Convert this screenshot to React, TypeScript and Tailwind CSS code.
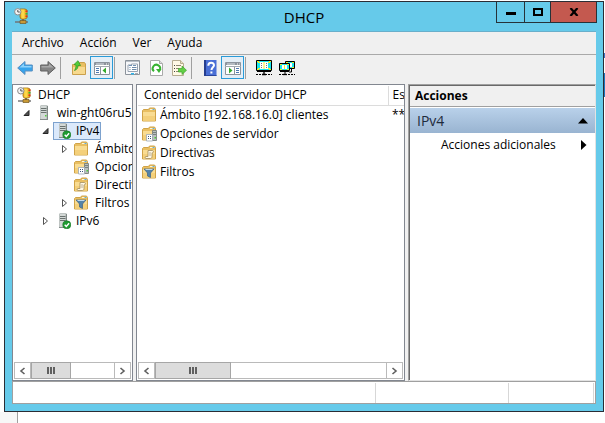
import type { ReactNode } from "react";

type IconProps = { children: ReactNode; w?: number; h?: number };

function Svg({ children, w = 16, h = 16 }: IconProps) {
  return (
    <svg width={w} height={h} viewBox={`0 0 ${w} ${h}`} aria-hidden="true" className="shrink-0">
      {children}
    </svg>
  );
}

function DhcpIcon() {
  return (
    <Svg>
      <path d="M6 1h5l2 1v8l-2 1H7L6 9z" fill="#f0b323" stroke="#9b6a12" strokeWidth=".8" />
      <path d="M7 1.500h3.500v9H7.500z" fill="#fbd84a" />
      <path d="M11.500 2.500h2V4h-2z" fill="#e0301e" />
      <path d="M11.500 5h2v1.500h-2z" fill="#3fae3a" />
      <path d="M11.500 7.500h2V9h-2z" fill="#e0301e" />
      <circle cx="3.800" cy="3.800" r="3.200" fill="#f4f4f4" stroke="#8b8b8b" />
      <path d="M3.800 2v2h2" fill="none" stroke="#444" strokeWidth=".9" />
      <path d="M8 11h2v2H8z" fill="#7c6a4a" />
      <path d="M1 14h13" stroke="#6f6f6f" strokeWidth="1.400" />
      <path d="M6 12.500h6v3H6z" fill="#c99a35" stroke="#735820" strokeWidth=".7" />
    </Svg>
  );
}

function ServerBody() {
  return (
    <>
      <path d="M4 1l1-.7h6l1 .7v13.5H4z" fill="#a9b0ae" />
      <path d="M4.500 1h6v13.500h-6z" fill="#d3d8d6" />
      <path d="M11 1h1v14h-1z" fill="#7f8785" />
      <path d="M5 3.500h5.500M5 5.500h5.500M5 7.500h5.500" stroke="#69716f" />
      <path d="M9 10h1.500v1.500H9z" fill="#4fd13c" />
      <path d="M4 14.500h8" stroke="#858c8a" />
    </>
  );
}

function ServerIcon() {
  return (
    <Svg>
      <ServerBody />
    </Svg>
  );
}

function ServerOkIcon() {
  return (
    <Svg>
      <ServerBody />
      <circle cx="11.800" cy="11.800" r="4" fill="#1f9b31" stroke="#12711f" strokeWidth=".6" />
      <path d="M9.700 11.800l1.600 1.700 2.800-3.300" fill="none" stroke="#fff" strokeWidth="1.400" />
    </Svg>
  );
}

function FolderBody() {
  return (
    <>
      <path d="M.5 3.500l1-1h5l1-1.500h5l1 1.500v11.500H.5z" fill="#e9bf62" stroke="#d0a348" />
      <path d="M1 5h12v8.500H1z" fill="#f9dc92" />
      <path d="M1 9h12v4.500H1z" fill="#f4d07b" />
      <path d="M8 2.500h4.500" stroke="#fff6d8" />
      <path d="M10.500 2.500h2" stroke="#5baee0" />
    </>
  );
}

function FolderIcon() {
  return (
    <Svg>
      <FolderBody />
    </Svg>
  );
}

function OptionsIcon() {
  return (
    <Svg>
      <FolderBody />
      <path d="M10.500 4.500h4v10h-4z" fill="#b9c0be" stroke="#707876" strokeWidth=".8" />
      <path d="M11 6.500h3M11 8.500h3" stroke="#6a7270" strokeWidth=".8" />
      <path d="M12.500 11h1.500v1.500h-1.500z" fill="#4bc93b" />
      <path d="M4.500 8.500h6v6.500h-6z" fill="#fff" stroke="#9aa7b4" strokeWidth=".8" />
      <path d="M6 10h1v1H6zM8 10h1v1H8zM6 12h1v1H6zM8 12h1v1H8z" fill="#39577c" />
    </Svg>
  );
}

function PolicyIcon() {
  return (
    <Svg>
      <FolderBody />
      <path d="M6 5.500h4.500c1.200 0 1.200 2.300 0 2.300H10v4c0 1.200-1 1.700-1.700 1.700H4c-1.200 0-1.200-2 0-2h2z" fill="#fff8e4" stroke="#a18b5c" strokeWidth=".8" />
      <path d="M7 8h2M7 10h2" stroke="#a99a78" strokeWidth=".8" />
    </Svg>
  );
}

function FilterIcon() {
  return (
    <Svg>
      <FolderBody />
      <path d="M2 5h10L8.500 9v4.500L5.500 12V9z" fill="#5583a8" stroke="#3f6383" strokeWidth=".7" />
      <path d="M3.500 5.500h7" stroke="#c1d9ea" />
    </Svg>
  );
}

function ArrowIcon({ kind }: { kind: "back" | "forward" }) {
  const back = kind === "back";
  return (
    <Svg>
      <path
        d={back ? "M.7 8L8 1.500v3.500h7.300v6H8v3.500z" : "M15.300 8L8 1.500v3.500H.7v6H8v3.500z"}
        fill={back ? "#36a4ec" : "#858585"}
        stroke={back ? "#5a8fc0" : "#5f5f5f"}
      />
      <path
        d={back ? "M2.500 7.500L7 3.500V6h7.500v1.500z" : "M13.500 7.500L9 3.500V6H1.500v1.500z"}
        fill={back ? "#8dd2fb" : "#a9a9a9"}
      />
    </Svg>
  );
}

function UpFolderIcon() {
  return (
    <Svg>
      <path d="M1.500 4.500h6l1-2h5l1 1.500v10.500h-13z" fill="#e9bf62" stroke="#caa04c" />
      <path d="M2 7h12v7H2z" fill="#f7d98e" />
      <path d="M3.500 10.500C6.500 9.500 7 7.500 7 5.500h2.500L7 .7 3 4.500 5 5c0 2.500-.5 3.500-1.500 5.500z" fill="#53cc37" stroke="#28951f" strokeWidth=".7" />
    </Svg>
  );
}

function PaneIcon({ side }: { side: "left" | "right" }) {
  const left = side === "left";
  return (
    <Svg>
      <path d="M.5 2.500h15v12H.5z" fill="#fff" stroke="#8c949d" />
      <path d="M1 3h14v2H1z" fill="#8c949d" />
      <path d="M2 4h8" stroke="#dce1e6" />
      <path d="M12 3.500h1v1h-1zM14 3.500h.7v1H14z" fill="#fff" />
      <path d="M0 6.500h16" stroke="#a2a9b1" />
      {left ? (
        <>
          <path d="M6.500 7v8" stroke="#8c949d" />
          <path d="M2 8.500h3M2 10.500h3M2 12.500h3" stroke="#4c79b2" />
          <path d="M12 7.500v6L8.500 10.500z" fill="#35aa2c" />
        </>
      ) : (
        <>
          <path d="M9.500 7v8" stroke="#8c949d" />
          <path d="M11 8.500h3M11 10.500h3M11 12.500h3" stroke="#4c79b2" />
          <path d="M4 7.500v6l3.500-3z" fill="#35aa2c" />
        </>
      )}
    </Svg>
  );
}

function PropertiesIcon() {
  return (
    <Svg>
      <path d="M.5.500h14v14H.5z" fill="#f7f8fa" stroke="#8c939b" />
      <path d="M1 1.500h13" stroke="#b9c0c8" />
      <path d="M3 5h3.500V4h6v7.500H3z" fill="#fff" stroke="#98a3b1" />
      <path d="M4 5.500h3M8 5.500h3" stroke="#6f91b5" />
      <path d="M4.500 7.500h1M4.500 9.500h1M7 7.500h4.500M7 9.500h4.500" stroke="#6b88a8" />
      <path d="M6 13h3v1.500H6z" fill="#2eb5eb" />
      <path d="M10 13h3v1h-3z" fill="#a5adb5" />
    </Svg>
  );
}

function RefreshIcon() {
  return (
    <Svg>
      <path d="M2.500.500h9l3 3v12h-12z" fill="#fff" stroke="#aaa" />
      <path d="M11.500.500v3h3" fill="#ddd" stroke="#aaa" />
      <path d="M6 11.300a3.700 3.700 0 1 1 5.600-1" fill="none" stroke="#39b332" strokeWidth="2" />
      <path d="M8 9h5.500L11 13z" fill="#39b332" />
    </Svg>
  );
}

function ExportIcon() {
  return (
    <Svg>
      <path d="M1.500.500h8l3 3v12h-11z" fill="#fff9e5" stroke="#b6ac91" />
      <path d="M9.500.500v3h3" fill="#eadfbf" stroke="#b6ac91" />
      <path d="M3 5.500h1M3 8.500h1M3 11.500h1" stroke="#444" />
      <path d="M5 5.500h5M5 8.500h3M5 11.500h3" stroke="#918870" />
      <path d="M7.500 8.500H11V6l4.500 4.300L11 14.500V12H7.500z" fill="#62cf45" stroke="#3da32c" strokeWidth=".7" />
    </Svg>
  );
}

function HelpIcon() {
  return (
    <Svg>
      <path d="M2 0h12.500v16H2z" fill="#4a6fd6" />
      <path d="M2 0h2v16H2z" fill="#263e8f" />
      <path d="M4 15h10.500v1H4z" fill="#2a479f" />
      <path d="M6.300 5.800c0-4 5.700-3.800 5.700-.6 0 2-2.500 2.200-2.500 4.800" fill="none" stroke="#fff" strokeWidth="2" />
      <path d="M8.400 11.500h2v2h-2z" fill="#fff" />
    </Svg>
  );
}

function MonitorIcon() {
  return (
    <Svg>
      <path d="M.5.500h15v10H.5z" fill="#19e6f0" stroke="#000" />
      <path d="M4 2h8v7H4z" fill="#fff" />
      <path d="M1 1h2v1H1zM2 2h2v1H2zM13 1h2v1h-2zM12 2h2v1h-2zM1 9h2v1H1zM2 8h2v1H2zM13 9h2v1h-2zM12 8h2v1h-2z" fill="#f5ee24" />
      <path d="M7.500 2h1v7h-1z" fill="#f5ee24" />
      <path d="M5.500 3v6M10.500 3v6" stroke="#777" strokeDasharray="1 1" />
      <path d="M1 11.500h14" stroke="#000" />
      <path d="M8 12v2M6 14.500h4" stroke="#000" strokeWidth="1.300" />
      <path d="M0 14.500h16" stroke="#000" strokeDasharray="2 1" />
    </Svg>
  );
}

function MonitorsIcon() {
  return (
    <Svg>
      <path d="M6.500 1.500h9v7h-9z" fill="#19e6f0" stroke="#000" />
      <path d="M9 3h4v4H9z" fill="#fff" />
      <path d="M7 2h2v1H7zM13 2h2v1h-2zM13 7h2v1h-2z" fill="#f5ee24" />
      <path d="M.5 3.500h10v7H.5z" fill="#19e6f0" stroke="#000" />
      <path d="M3 5h5v4H3z" fill="#fff" />
      <path d="M1 4h2v1H1zM8 4h2v1H8zM1 9h2v1H1zM8 9h2v1H8zM5 5h1v4H5z" fill="#f5ee24" />
      <path d="M1 11.500h9" stroke="#000" />
      <path d="M6 12v2M12.500 9v3H10" fill="none" stroke="#000" />
      <path d="M0 14.500h16" stroke="#000" strokeDasharray="2 1" />
      <path d="M4 14.500h4" stroke="#000" strokeWidth="1.300" />
    </Svg>
  );
}

function ToolButton({ label, pressed, children }: { label: string; pressed?: boolean; children: ReactNode }) {
  return (
    <button
      type="button"
      aria-label={label}
      aria-pressed={pressed}
      className={
        pressed
          ? "flex h-[23px] w-[23px] items-center justify-center border border-[#2a9bd8] bg-[#e4eef6]"
          : "flex h-[23px] w-[23px] items-center justify-center"
      }
    >
      {children}
    </button>
  );
}

function Separator() {
  return <div className="ml-px mr-1.5 h-[22px] w-px bg-[#a0a0a0]" />;
}

function Expander({ state }: { state?: "open" | "closed" }) {
  return (
    <span className="flex w-[13px] shrink-0 items-center">
      {state === "open" && (
        <Svg w={8} h={8}>
          <path d="M6 1.500V6.500H1z" fill="#505050" stroke="#262626" />
        </Svg>
      )}
      {state === "closed" && (
        <Svg w={8} h={10}>
          <path d="M1.500 1.500v7L5.500 5z" fill="#fff" stroke="#555" />
        </Svg>
      )}
    </span>
  );
}

type Node = {
  label: string;
  indent: string;
  icon: ReactNode;
  state?: "open" | "closed";
  root?: boolean;
  selected?: boolean;
};

const tree: Node[] = [
  { label: "DHCP", indent: "pl-1", icon: <DhcpIcon />, root: true },
  { label: "win-ght06ru5c", indent: "pl-2.5", icon: <ServerIcon />, state: "open" },
  { label: "IPv4", indent: "pl-[29px]", icon: <ServerOkIcon />, state: "open", selected: true },
  { label: "Ámbito", indent: "pl-12", icon: <FolderIcon />, state: "closed" },
  { label: "Opcion", indent: "pl-12", icon: <OptionsIcon /> },
  { label: "Directiv", indent: "pl-12", icon: <PolicyIcon /> },
  { label: "Filtros", indent: "pl-12", icon: <FilterIcon />, state: "closed" },
  { label: "IPv6", indent: "pl-[29px]", icon: <ServerOkIcon />, state: "closed" },
];

function TreeRow({ node }: { node: Node }) {
  return (
    <li role="treeitem" aria-selected={!!node.selected} className={`flex h-[18px] items-center whitespace-nowrap ${node.indent}`}>
      {!node.root && <Expander state={node.state} />}
      <span
        className={
          node.selected
            ? "-ml-0.5 flex h-[18px] items-center gap-1 border border-[#7da2ce] bg-[#dbe9fb] px-px"
            : "flex items-center gap-1"
        }
      >
        {node.icon}
        <span className="pl-px">{node.label}</span>
      </span>
    </li>
  );
}

const rows = [
  { label: "Ámbito [192.168.16.0] clientes", icon: <FolderIcon />, status: "**" },
  { label: "Opciones de servidor", icon: <OptionsIcon />, status: "" },
  { label: "Directivas", icon: <PolicyIcon />, status: "" },
  { label: "Filtros", icon: <FilterIcon />, status: "" },
];

function ScrollArrow({ dir }: { dir: "left" | "right" }) {
  return (
    <button
      type="button"
      aria-label={dir === "left" ? "Desplazar a la izquierda" : "Desplazar a la derecha"}
      className="flex w-[17px] shrink-0 items-center justify-center border border-[#bababa] bg-white"
    >
      <Svg w={7} h={8}>
        <path d={dir === "left" ? "M5.500 1L2 4l3.500 3" : "M1.500 1L5 4 1.500 7"} fill="none" stroke="#606060" strokeWidth="1.600" />
      </Svg>
    </button>
  );
}

function ScrollBar({ thumb }: { thumb: string }) {
  return (
    <div className="mx-px mb-px flex h-[17px] shrink-0">
      <ScrollArrow dir="left" />
      <div className="flex min-w-0 flex-1 border-y border-[#bababa] bg-white">
        <div className={`-my-px flex items-center justify-center gap-px border border-[#a6a6a6] bg-[#dcdcdc] ${thumb}`}>
          <i className="h-[7px] w-0.5 bg-[#606060]" />
          <i className="h-[7px] w-0.5 bg-[#606060]" />
          <i className="h-[7px] w-0.5 bg-[#606060]" />
        </div>
      </div>
      <ScrollArrow dir="right" />
    </div>
  );
}

export default function App() {
  return (
    <div className="relative flex h-screen flex-col bg-white pl-1 pr-px pt-px font-['Open_Sans','Noto_Sans',sans-serif] text-[12px] leading-4 text-black">
      <main className="flex min-h-0 flex-1 flex-col border border-[#2b2d35] bg-[#66caea] px-[7px] pb-[7px]">
        <header className="grid h-[29px] shrink-0 grid-cols-[1fr_auto_1fr] items-center">
          <div className="pb-px pl-0.5">
            <DhcpIcon />
          </div>
          <h1 className="text-[15px] leading-5">DHCP</h1>
          <div className="-mr-px flex h-[21px] self-start justify-self-end border-x border-b border-[#263238]">
            <button type="button" aria-label="Minimizar" className="flex w-7 items-center justify-center border-r border-[#263238]">
              <Svg w={10} h={8}>
                <path d="M0 4h10v3H0z" />
              </Svg>
            </button>
            <button type="button" aria-label="Maximizar" className="flex w-[26px] items-center justify-center border-r border-[#263238]">
              <Svg w={10} h={8}>
                <path d="M1 1h8v6H1z" fill="none" stroke="#000" strokeWidth="2" />
              </Svg>
            </button>
            <button type="button" aria-label="Cerrar" className="flex w-[45px] items-center justify-center bg-[#c4594f]">
              <Svg w={10} h={8}>
                <path d="M1.500 0l7 8M8.500 0l-7 8" stroke="#000" strokeWidth="2.200" />
              </Svg>
            </button>
          </div>
        </header>

        <div className="flex min-h-0 flex-1 flex-col border-t border-[#69afcb] bg-[#f0f0f0]">
          <nav className="flex h-[23px] shrink-0 items-center gap-4 border-b border-[#a9a9a9] pl-2.5">
            <button type="button">Archivo</button>
            <button type="button">Acción</button>
            <button type="button">Ver</button>
            <button type="button">Ayuda</button>
          </nav>

          <div role="toolbar" className="flex h-[29px] shrink-0 items-center pb-1 pl-px">
            <ToolButton label="Atrás"><ArrowIcon kind="back" /></ToolButton>
            <ToolButton label="Adelante"><ArrowIcon kind="forward" /></ToolButton>
            <Separator />
            <ToolButton label="Subir un nivel"><UpFolderIcon /></ToolButton>
            <ToolButton label="Mostrar árbol" pressed><PaneIcon side="left" /></ToolButton>
            <Separator />
            <ToolButton label="Propiedades"><PropertiesIcon /></ToolButton>
            <ToolButton label="Actualizar"><RefreshIcon /></ToolButton>
            <ToolButton label="Exportar lista"><ExportIcon /></ToolButton>
            <Separator />
            <ToolButton label="Ayuda"><HelpIcon /></ToolButton>
            <ToolButton label="Mostrar acciones" pressed><PaneIcon side="right" /></ToolButton>
            <Separator />
            <ToolButton label="Servidor"><MonitorIcon /></ToolButton>
            <ToolButton label="Servidores"><MonitorsIcon /></ToolButton>
          </div>

          <div className="flex min-h-0 flex-1">
            <section className="mr-[3px] flex w-[121px] shrink-0 flex-col border border-[#828790] bg-white">
              <ul role="tree" className="flex-1 overflow-hidden pt-px">
                {tree.map((n) => (
                  <TreeRow key={n.label} node={n} />
                ))}
              </ul>
              <ScrollBar thumb="w-10" />
            </section>

            <section className="flex min-w-0 flex-1 flex-col border border-[#828790] bg-white">
              <div className="ml-px flex-1 overflow-hidden pt-px">
                <table className="w-full table-fixed border-collapse text-left">
                  <thead>
                    <tr className="h-[19px]">
                      <th className="border-b border-r border-[#dcdcdc] p-0 pl-1.5 font-normal">Contenido del servidor DHCP</th>
                      <th className="w-4 overflow-hidden whitespace-nowrap border-b border-[#dcdcdc] p-0 pl-1 font-normal">Es</th>
                    </tr>
                  </thead>
                  <tbody>
                    {rows.map((r) => (
                      <tr key={r.label} className="h-[19px]">
                        <td className="p-0 pl-1">
                          <span className="flex items-center gap-0.5 whitespace-nowrap">
                            {r.icon}
                            <span>{r.label}</span>
                          </span>
                        </td>
                        <td className="overflow-hidden whitespace-nowrap p-0 pl-1">{r.status}</td>
                      </tr>
                    ))}
                  </tbody>
                </table>
              </div>
              <ScrollBar thumb="w-[76px]" />
            </section>

            <aside className="ml-[3px] flex w-[188px] shrink-0 flex-col border-b border-l border-r border-t border-b-[#e3e3e3] border-l-[#a0a0a0] border-r-[#e3e3e3] border-t-[#a0a0a0]">
              <div className="flex-1 border-l border-t border-[#696969] bg-white">
                <h2 className="flex h-[21px] items-center border-b border-[#a0a0a0] bg-[#f0f0f0] pl-[5px] font-bold">Acciones</h2>
                <button type="button" className="mt-px flex h-[25px] w-full items-center justify-between bg-linear-to-b from-[#b9d1ea] to-[#99b4d1] pl-[7px] pr-[7px] text-[14px] text-[#1e2b3c]">
                  IPv4
                  <Svg w={10} h={6}>
                    <path d="M5 0l5 5.500H0z" />
                  </Svg>
                </button>
                <button type="button" className="flex h-6 w-full items-center justify-between pl-[31px] pr-2">
                  Acciones adicionales
                  <Svg w={6} h={10}>
                    <path d="M0 0l5.500 5L0 10z" />
                  </Svg>
                </button>
              </div>
            </aside>
          </div>

          <footer className="flex h-[23px] shrink-0 border border-[#a0a0a0] bg-white pt-px">
            <div className="flex-1 border-r border-[#d7d7d7]" />
            <div className="w-[133px] border-r border-[#d7d7d7]" />
            <div className="mr-px w-[85px] border-r border-[#d7d7d7]" />
          </footer>
        </div>
      </main>
      <div className="-ml-1 h-[11px] w-[18px] shrink-0 border-r border-[#a0a0a0] bg-[#f7f7f7]" />
      <i className="absolute right-0 top-[73px] h-6 w-px bg-[#1c78c0]" />
      <i className="absolute right-0 top-[53px] h-[5px] w-px bg-[#3f73c4]" />
    </div>
  );
}
